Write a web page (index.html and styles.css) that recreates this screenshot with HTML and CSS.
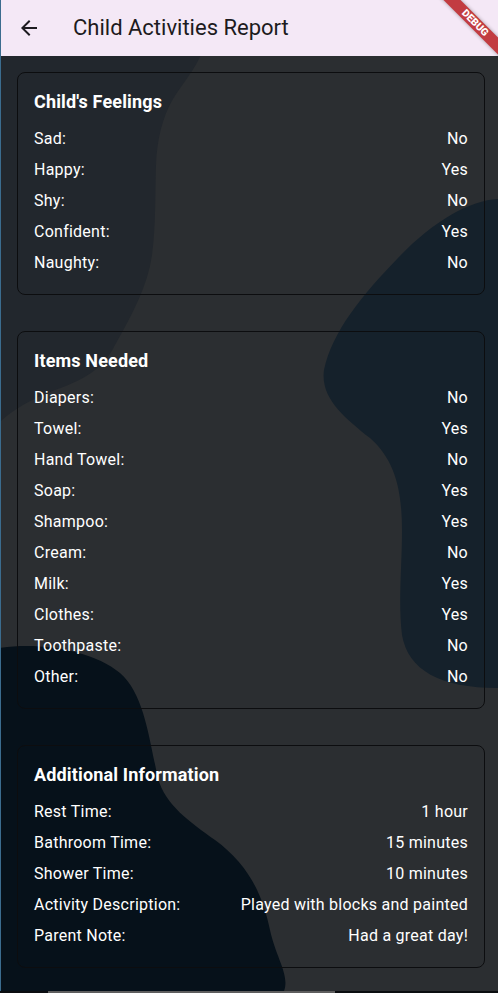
FILE: index.html
```html
<!DOCTYPE html>
<html lang="en">
<head>
<meta charset="utf-8">
<title>Child Activities Report</title>
<link rel="stylesheet" href="styles.css">
</head>
<body>
<div class="app">
  <svg class="blobs" width="498" height="991" viewBox="0 0 498 991" aria-hidden="true">
    <rect x="0" y="0" width="498" height="991" fill="#2b2e31"/>
    <path fill="#22272d" d="M0,40 L205,40 C203,60 185,80 173,99 C162,118 157,140 156,165 C155,195 156,225 152,255 C148,285 132,315 115,345 C105,365 90,378 55,390 C30,400 12,410 0,422 Z"/>
    <path fill="#15212b" d="M498,199 C470,200 432,222 398,258 C362,295 332,332 324,370 C320,398 345,418 370,438 C395,460 402,490 402,530 C402,568 398,600 402,635 C408,670 440,688 498,688 Z"/>
    <path fill="#06111a" d="M0,648 C40,642 92,650 120,673 C145,695 149,740 158,778 C165,805 190,822 215,840 C245,862 262,890 270,930 C276,958 290,975 284,991 L0,991 Z"/>
  </svg>

  <header class="appbar">
    <button class="back" aria-label="Back">
      <svg width="24" height="24" viewBox="0 0 24 24"><path fill="#1d1b20" d="M20 11H7.830l5.59-5.59L12 4l-8 8 8 8 1.41-1.41L7.83 13H20v-2z"/></svg>
    </button>
    <h1 class="title">Child Activities Report</h1>
  </header>

  <div class="debug"><span>DEBUG</span></div>

  <main class="content">
    <section class="card">
      <h2 class="card-title">Child's Feelings</h2>
      <div class="row"><span>Sad:</span><span>No</span></div>
      <div class="row"><span>Happy:</span><span>Yes</span></div>
      <div class="row"><span>Shy:</span><span>No</span></div>
      <div class="row"><span>Confident:</span><span>Yes</span></div>
      <div class="row"><span>Naughty:</span><span>No</span></div>
    </section>

    <section class="card">
      <h2 class="card-title">Items Needed</h2>
      <div class="row"><span>Diapers:</span><span>No</span></div>
      <div class="row"><span>Towel:</span><span>Yes</span></div>
      <div class="row"><span>Hand Towel:</span><span>No</span></div>
      <div class="row"><span>Soap:</span><span>Yes</span></div>
      <div class="row"><span>Shampoo:</span><span>Yes</span></div>
      <div class="row"><span>Cream:</span><span>No</span></div>
      <div class="row"><span>Milk:</span><span>Yes</span></div>
      <div class="row"><span>Clothes:</span><span>Yes</span></div>
      <div class="row"><span>Toothpaste:</span><span>No</span></div>
      <div class="row"><span>Other:</span><span>No</span></div>
    </section>

    <section class="card">
      <h2 class="card-title">Additional Information</h2>
      <div class="row"><span>Rest Time:</span><span>1 hour</span></div>
      <div class="row"><span>Bathroom Time:</span><span>15 minutes</span></div>
      <div class="row"><span>Shower Time:</span><span>10 minutes</span></div>
      <div class="row"><span>Activity Description:</span><span>Played with blocks and painted</span></div>
      <div class="row"><span>Parent Note:</span><span>Had a great day!</span></div>
    </section>
  </main>
</div>
<div class="hscroll"><div class="thumb"></div></div>
</body>
</html>
```

FILE: styles.css
```css
* { box-sizing: border-box; }
html, body {
  margin: 0;
  padding: 0;
  width: 498px;
  height: 993px;
  overflow: hidden;
  background: #2b2e31;
  font-family: Roboto, "Noto Sans", "Liberation Sans", sans-serif;
}
body {
  display: flex;
  flex-direction: column;
}
.app {
  position: relative;
  height: 991px;
  border-left: 1px solid #3b6c8e;
  overflow: hidden;
}
.blobs {
  position: absolute;
  left: -1px;
  top: 0;
  z-index: 0;
}
.appbar {
  position: relative;
  z-index: 1;
  height: 56px;
  background: #f4e8f6;
  display: flex;
  align-items: center;
}
.back {
  width: 56px;
  height: 56px;
  padding: 0;
  margin: 0;
  border: 0;
  background: transparent;
  display: flex;
  align-items: center;
  justify-content: center;
}
.title {
  margin: 0 0 0 16px;
  font-size: 22px;
  font-weight: 400;
  color: #1d1b20;
  line-height: 28px;
  letter-spacing: 0;
}
.debug {
  position: absolute;
  z-index: 3;
  left: 418.75px;
  top: 17.25px;
  width: 110px;
  height: 12px;
  transform: rotate(45deg);
  background: #c23c41;
  box-shadow: 0 0 4px rgba(0,0,0,0.35);
  display: flex;
  align-items: center;
  justify-content: center;
}
.debug span {
  color: #fff;
  font-size: 10.2px;
  font-weight: 900;
  line-height: 1;
}
.content {
  position: relative;
  z-index: 1;
  padding: 16px 13px 0 16px;
  display: flex;
  flex-direction: column;
  gap: 36px;
}
.card {
  border: 1px solid #0c0d0f;
  border-radius: 8px;
  padding: 16px;
  color: #fff;
}
.card-title {
  margin: 0 0 10px 0;
  font-size: 18px;
  font-weight: 700;
  line-height: 24px;
  padding-top: 1px;
  height: 24px;
  letter-spacing: 0.15px;
}
.row {
  display: flex;
  justify-content: space-between;
  font-size: 16px;
  line-height: 19px;
  padding: 6px 0;
  letter-spacing: 0.25px;
}
.hscroll {
  height: 2px;
  background: #0b0d10;
  position: relative;
}
.thumb {
  margin-left: 48px;
  width: 287px;
  height: 2px;
  background: #5e5e5e;
}
```
